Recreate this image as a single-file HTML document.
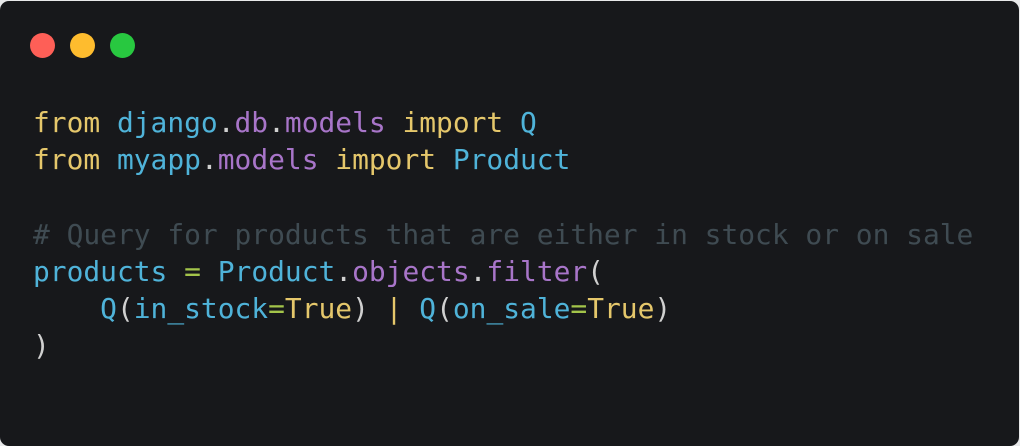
<!DOCTYPE html>
<html><head><style>
html,body{margin:0;padding:0;background:#e8e9ea;width:1020px;height:446px;overflow:hidden}
.card{position:absolute;left:0;top:1px;width:1019px;height:445px;background:#17181b;border-radius:9px}
.d{position:absolute;top:32px;width:25px;height:25px;border-radius:50%}
pre{position:absolute;left:33px;top:103px;margin:0;font-family:"DejaVu Sans Mono","Liberation Mono",monospace;font-size:27.9px;line-height:37.2px;color:#d0d0d0}
.k{color:#e5c76b}.b{color:#4fb3d9}.p{color:#a875c9}.c{color:#3f4b52}.g{color:#a3c44a}
</style></head><body>
<div class="card">
<div class="d" style="left:30px;background:#fe5f57"></div>
<div class="d" style="left:70px;background:#febc2e"></div>
<div class="d" style="left:110px;background:#28c840"></div>
<pre><span class="k">from</span> <span class="b">django</span>.<span class="p">db</span>.<span class="p">models</span> <span class="k">import</span> <span class="b">Q</span>
<span class="k">from</span> <span class="b">myapp</span>.<span class="p">models</span> <span class="k">import</span> <span class="b">Product</span>

<span class="c"># Query for products that are either in stock or on sale</span>
<span class="b">products</span> <span class="g">=</span> <span class="b">Product</span>.<span class="p">objects</span>.<span class="p">filter</span>(
    <span class="b">Q</span>(<span class="b">in_stock</span><span class="g">=</span><span class="k">True</span>) <span class="k">|</span> <span class="b">Q</span>(<span class="b">on_sale</span><span class="g">=</span><span class="k">True</span>)
)</pre>
</div>
</body></html>
